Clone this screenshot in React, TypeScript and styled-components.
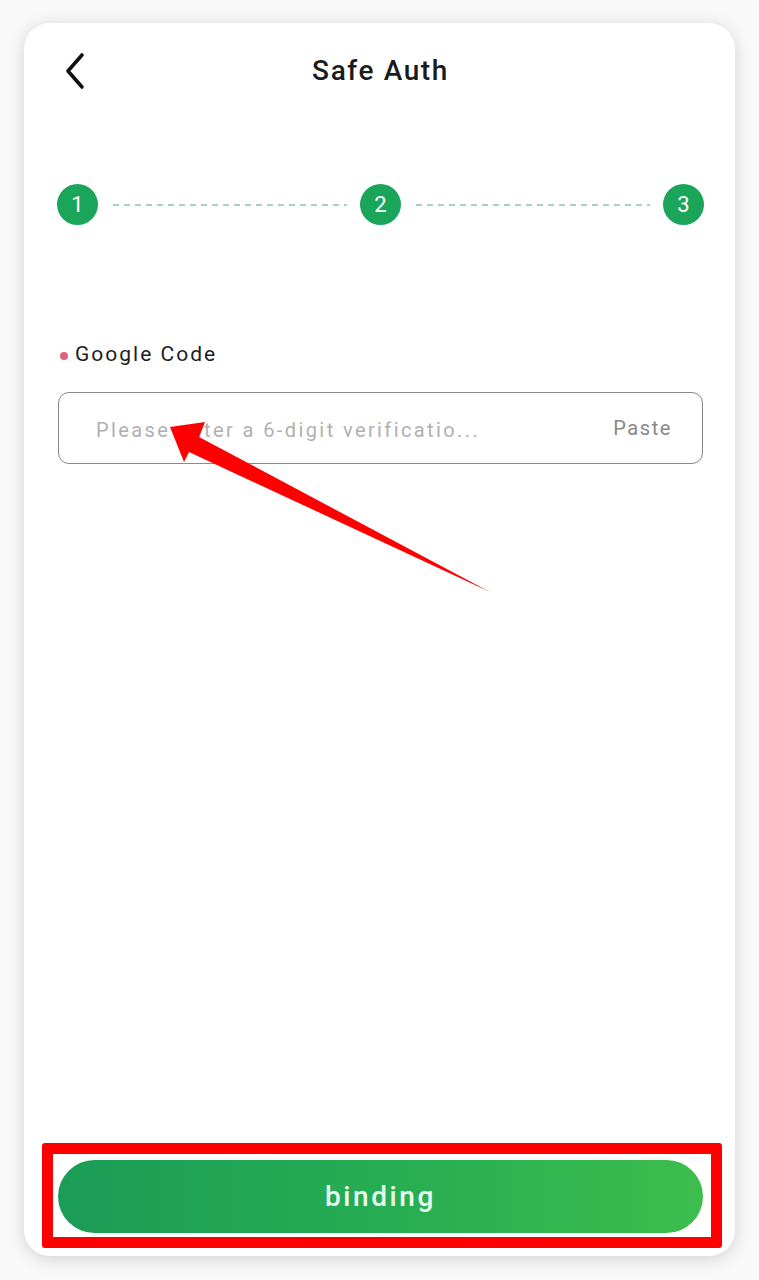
import React from "react";
import styled, { createGlobalStyle } from "styled-components";

const Global = createGlobalStyle`
  html, body { margin: 0; padding: 0; background: #f9f9f9; }
  body { font-family: Roboto, "Noto Sans", "Liberation Sans", sans-serif; }
  * { box-sizing: border-box; }
`;

const Page = styled.div`
  position: relative;
  width: 759px;
  height: 1280px;
  padding: 23px 24px 24px 24px;
`;

const Card = styled.div`
  height: 1233px;
  background: #ffffff;
  border-radius: 26px;
  box-shadow: 0 3px 18px rgba(0, 0, 0, 0.16);
  display: flex;
  flex-direction: column;
  overflow: hidden;
`;

const Header = styled.div`
  position: relative;
  height: 94px;
  display: flex;
  align-items: center;
  justify-content: center;
`;

const BackButton = styled.div`
  position: absolute;
  left: 36px;
  top: 28px;
  width: 30px;
  height: 40px;
  display: flex;
  align-items: center;
  justify-content: center;
`;

const Title = styled.div`
  font-size: 28px;
  font-weight: 500;
  color: #1b1b1b;
  letter-spacing: 1.6px;
  margin-left: 2px;
`;

const Stepper = styled.div`
  margin-top: 67px;
  padding: 0 31px 0 33px;
  display: flex;
  align-items: center;
`;

const StepDot = styled.div`
  width: 41px;
  height: 41px;
  border-radius: 50%;
  background: #1aa55a;
  color: #ffffff;
  font-size: 22px;
  display: flex;
  align-items: center;
  justify-content: center;
  flex-shrink: 0;
`;

const StepLine = styled.div`
  flex: 1;
  height: 2px;
  margin: 0 13px 0 15px;
  background: repeating-linear-gradient(
    90deg,
    #a6d3c9 0px,
    #a6d3c9 6px,
    transparent 6px,
    transparent 11px
  );
`;

const Form = styled.div`
  margin-top: 117px;
  padding: 0 32px 0 34px;
  display: flex;
  flex-direction: column;
`;

const Label = styled.div`
  display: flex;
  align-items: center;
  gap: 7px;
  font-size: 21px;
  color: #1d1d1d;
  letter-spacing: 2px;
  padding-left: 2px;
`;

const RequiredDot = styled.span`
  width: 8px;
  height: 8px;
  border-radius: 50%;
  background: #e0607e;
  margin-top: 4px;
`;

const InputBox = styled.div`
  margin-top: 26px;
  height: 72px;
  border: 1.5px solid #8a8a8a;
  border-radius: 11px;
  display: flex;
  align-items: center;
  padding: 0 30px 0 37px;
`;

const Placeholder = styled.div`
  flex: 1;
  font-size: 20px;
  color: #b0b0b0;
  letter-spacing: 2.4px;
  white-space: nowrap;
  margin-top: 4px;
`;

const PasteLabel = styled.div`
  font-size: 20px;
  color: #888888;
  letter-spacing: 1.6px;
`;

const Spacer = styled.div`
  flex: 1;
`;

const Footer = styled.div`
  margin: 0 13px 8px 18px;
  border: 11px solid #ff0000;
  border-radius: 3px;
  padding: 6px 8px 4px 5px;
`;

const BindButton = styled.div`
  height: 73px;
  border-radius: 37px;
  background: linear-gradient(90deg, #1b9c57 0%, #26ad52 50%, #3cbd4d 100%);
  color: #eafbee;
  font-size: 28px;
  font-weight: 500;
  letter-spacing: 2.6px;
  display: flex;
  align-items: center;
  justify-content: center;
`;

const ArrowOverlay = styled.svg`
  position: absolute;
  left: 0;
  top: 0;
  pointer-events: none;
`;

export default function App() {
  return (
    <Page>
      <Global />
      <Card>
        <Header>
          <BackButton>
            <svg width="24" height="38" viewBox="0 0 24 38">
              <polyline
                points="19,3 5,19 19,35"
                fill="none"
                stroke="#111"
                strokeWidth="3.6"
                strokeLinecap="round"
                strokeLinejoin="round"
              />
            </svg>
          </BackButton>
          <Title>Safe Auth</Title>
        </Header>
        <Stepper>
          <StepDot>1</StepDot>
          <StepLine />
          <StepDot>2</StepDot>
          <StepLine />
          <StepDot>3</StepDot>
        </Stepper>
        <Form>
          <Label>
            <RequiredDot />
            Google Code
          </Label>
          <InputBox>
            <Placeholder>Please enter a 6-digit verificatio...</Placeholder>
            <PasteLabel>Paste</PasteLabel>
          </InputBox>
        </Form>
        <Spacer />
        <Footer>
          <BindButton>binding</BindButton>
        </Footer>
      </Card>
      <ArrowOverlay width="759" height="1280" viewBox="0 0 759 1280">
        <polygon
          points="170,427 205,422 199,437 490,592 189,452 184,462"
          fill="#ff0000"
        />
      </ArrowOverlay>
    </Page>
  );
}
